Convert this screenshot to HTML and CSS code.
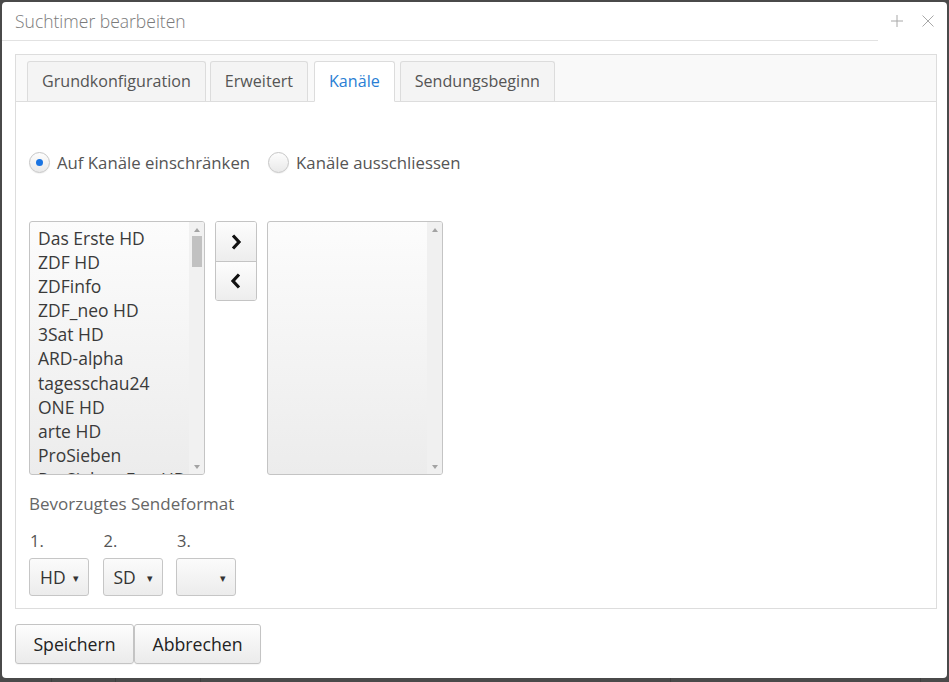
FILE: index.html
```html
<!DOCTYPE html>
<html lang="de">
<head>
<meta charset="utf-8">
<title>Suchtimer bearbeiten</title>
<link rel="stylesheet" href="styles.css">
</head>
<body>
<div class="dialog">
  <div class="header">
    <div class="title">Suchtimer bearbeiten</div>
    <div class="header-icons">
      <svg class="hicon" width="12" height="12" viewBox="0 0 12 12"><path d="M6 0V12M0 6H12" stroke="#a8a8a8" stroke-width="1" fill="none"/></svg>
      <svg class="hicon" width="12" height="12" viewBox="0 0 12 12"><path d="M0.5 0.5L11.5 11.5M11.5 0.5L0.5 11.5" stroke="#a8a8a8" stroke-width="1" fill="none"/></svg>
    </div>
  </div>
  <div class="header-rule"></div>
  <div class="body">
    <div class="panel">
      <div class="tabbar">
        <div class="tab">Grundkonfiguration</div>
        <div class="tab">Erweitert</div>
        <div class="tab active">Kanäle</div>
        <div class="tab">Sendungsbeginn</div>
      </div>
      <div class="tabcontent">
        <div class="radios">
          <label class="radio"><span class="rbox checked"></span>Auf Kanäle einschränken</label>
          <label class="radio"><span class="rbox"></span>Kanäle ausschliessen</label>
        </div>
        <div class="lists">
          <div class="listbox">
            <div class="items">
              <div class="item">Das Erste HD</div>
              <div class="item">ZDF HD</div>
              <div class="item">ZDFinfo</div>
              <div class="item">ZDF_neo HD</div>
              <div class="item">3Sat HD</div>
              <div class="item">ARD-alpha</div>
              <div class="item">tagesschau24</div>
              <div class="item">ONE HD</div>
              <div class="item">arte HD</div>
              <div class="item">ProSieben</div>
              <div class="item">ProSieben Fun HD</div>
            </div>
            <div class="scrollbar">
              <span class="arr up"></span>
              <span class="thumb"></span>
              <span class="arr down"></span>
            </div>
          </div>
          <div class="movebtns">
            <div class="mbtn"><svg width="14" height="18" viewBox="0 0 14 18"><path d="M4 2.5L10 9L4 15.5" stroke="#111" stroke-width="3.2" fill="none" stroke-linejoin="miter"/></svg></div>
            <div class="mbtn"><svg width="14" height="18" viewBox="0 0 14 18"><path d="M10 2.5L4 9L10 15.5" stroke="#111" stroke-width="3.2" fill="none" stroke-linejoin="miter"/></svg></div>
          </div>
          <div class="listbox empty">
            <div class="items"></div>
            <div class="scrollbar light">
              <span class="arr up"></span>
              <span class="spacer"></span>
              <span class="arr down"></span>
            </div>
          </div>
        </div>
        <div class="format-title">Bevorzugtes Sendeformat</div>
        <div class="formats">
          <div class="fmt">
            <div class="fmt-label">1.</div>
            <div class="select"><span class="sval">HD</span><span class="caret">▾</span></div>
          </div>
          <div class="fmt">
            <div class="fmt-label">2.</div>
            <div class="select"><span class="sval">SD</span><span class="caret">▾</span></div>
          </div>
          <div class="fmt">
            <div class="fmt-label">3.</div>
            <div class="select"><span class="sval"></span><span class="caret">▾</span></div>
          </div>
        </div>
      </div>
    </div>
    <div class="footer">
      <button class="btn">Speichern</button><button class="btn">Abbrechen</button>
    </div>
  </div>
</div>
<div class="under">
  <span class="ucell c1"></span><span class="ucell c2"></span><span class="ucell c3"></span><span class="ucell c4"></span><span class="ucell c5"></span>
</div>
</body>
</html>
```
FILE: styles.css
```css
* { box-sizing: border-box; }
html, body { margin: 0; padding: 0; }
body {
  background: #4a4a4a;
  font-family: "Open Sans", "Liberation Sans", sans-serif;
  color: #444;
  width: 949px;
  height: 682px;
  overflow: hidden;
  padding: 2px 2px 0 2px;
}
.dialog {
  width: 945px;
  height: 676px;
  background: #fff;
  border-radius: 4px;
}
.header {
  height: 38px;
  display: flex;
  align-items: center;
  justify-content: space-between;
  padding: 0 13px 0 13px;
}
.title {
  font-size: 17.5px;
  font-weight: 300;
  color: #7a7a7a;
}
.header-icons {
  display: flex;
  gap: 19px;
  align-items: center;
  margin-top: -1px;
}
.hicon { display: block; }
.header-rule {
  width: 876px;
  height: 1px;
  background: #e2e2e2;
}
.body {
  padding: 13px 0 0 13px;
}
.panel {
  width: 922px;
  height: 555px;
  border: 1px solid #ddd;
  display: flex;
  flex-direction: column;
}
.tabbar {
  height: 47px;
  background: #f9f9f9;
  border-bottom: 1px solid #ddd;
  display: flex;
  align-items: flex-end;
  padding-left: 11px;
  gap: 4px;
}
.tab {
  height: 41px;
  margin-bottom: -1px;
  border: 1px solid #dcdcdc;
  border-bottom: 1px solid #ddd;
  border-radius: 3px 3px 0 0;
  background: #f4f4f4;
  padding: 0 14px 1px 14px;
  font-size: 16.1px;
  color: #555;
  display: flex;
  align-items: center;
}
.tab.active {
  background: #fff;
  border-bottom-color: #fff;
  color: #2a7ed4;
  margin-left: 2px;
  margin-right: 1px;
}
.tabcontent {
  flex: 1;
  padding: 0 0 0 13px;
}
.radios {
  display: flex;
  gap: 18px;
  margin-top: 50px;
  height: 20px;
  align-items: center;
}
.radio {
  display: flex;
  align-items: center;
  font-size: 16.75px;
  color: #555;
}
.rbox {
  width: 21px;
  height: 21px;
  border-radius: 50%;
  border: 1px solid #c6c6c6;
  background: linear-gradient(#fdfdfd, #e9e9e9);
  margin-right: 7px;
  position: relative;
  box-shadow: 0 1px 1px rgba(0,0,0,0.05);
}
.rbox.checked::after {
  content: "";
  position: absolute;
  left: 6px;
  top: 6px;
  width: 7px;
  height: 7px;
  border-radius: 50%;
  background: #1a74e2;
}
.lists {
  display: flex;
  margin-top: 49px;
  gap: 10px;
  align-items: flex-start;
}
.listbox {
  width: 176px;
  height: 254px;
  border: 1px solid #c4c4c4;
  border-radius: 3px;
  background: linear-gradient(#fcfcfc, #ececec);
  display: flex;
  overflow: hidden;
}
.items {
  flex: 1;
  padding: 4px 0 0 8px;
  overflow: hidden;
}
.item {
  font-size: 17.5px;
  line-height: 24.1px;
  color: #3a3a3a;
  white-space: nowrap;
}
.scrollbar {
  width: 15px;
  display: flex;
  flex-direction: column;
  align-items: center;
  background: #f1f1f1;
}
.scrollbar.light { background: #f0f0f0; }
.arr {
  width: 0; height: 0;
  border-left: 3.5px solid transparent;
  border-right: 3.5px solid transparent;
}
.arr.up { border-bottom: 4px solid #a3a3a3; margin-top: 6px; }
.arr.down { border-top: 4px solid #a3a3a3; margin-top: auto; margin-bottom: 5px; }
.thumb {
  width: 10px;
  height: 31px;
  background: #c1c1c1;
  margin-top: 4px;
}
.spacer { flex: 1; }
.listbox.empty .arr.down { margin-top: 0; }
.movebtns {
  display: flex;
  flex-direction: column;
  width: 42px;
  border: 1px solid #c4c4c4;
  border-radius: 3px;
  overflow: hidden;
}
.mbtn {
  height: 39px;
  background: linear-gradient(#fdfdfd, #ededed);
  display: flex;
  align-items: center;
  justify-content: center;
}
.mbtn + .mbtn { border-top: 1px solid #c4c4c4; }
.format-title {
  margin-top: 18px;
  font-size: 17px;
  color: #666;
  line-height: 22px;
}
.formats {
  display: flex;
  gap: 13.5px;
  margin-top: 15px;
}
.fmt-label {
  font-size: 16.5px;
  color: #555;
  line-height: 22px;
  padding-left: 1px;
}
.select {
  margin-top: 6px;
  width: 60px;
  height: 38px;
  border: 1px solid #c6c6c6;
  border-radius: 3px;
  background: linear-gradient(#fbfbfb, #ececec);
  display: flex;
  align-items: center;
  padding: 0 0 0 10px;
  font-size: 17.5px;
  color: #333;
}
.sval { flex: 1; }
.caret {
  font-size: 11px;
  color: #333;
  margin-right: 9px;
}
.footer {
  display: flex;
  margin-top: 15px;
}
.btn {
  height: 40px;
  font-family: "Open Sans", "Liberation Sans", sans-serif;
  font-size: 17.7px;
  color: #222;
  border: 1px solid #c4c4c4;
  border-radius: 3px;
  background: linear-gradient(#fdfdfd, #ebebeb);
  padding: 0;
  margin: 0;
  box-shadow: 0 1px 1px rgba(0,0,0,0.04);
}
.btn:first-child { width: 119px; }
.btn:last-child { width: 127px; }
.under {
  height: 4px;
  display: flex;
}
.ucell { height: 4px; border-right: 1px solid #3e3e3e; }
.c1 { width: 50px; }
.c2 { width: 64px; }
.c3 { width: 85px; }
.c4 { width: 470px; }
.c5 { width: 250px; }
```
